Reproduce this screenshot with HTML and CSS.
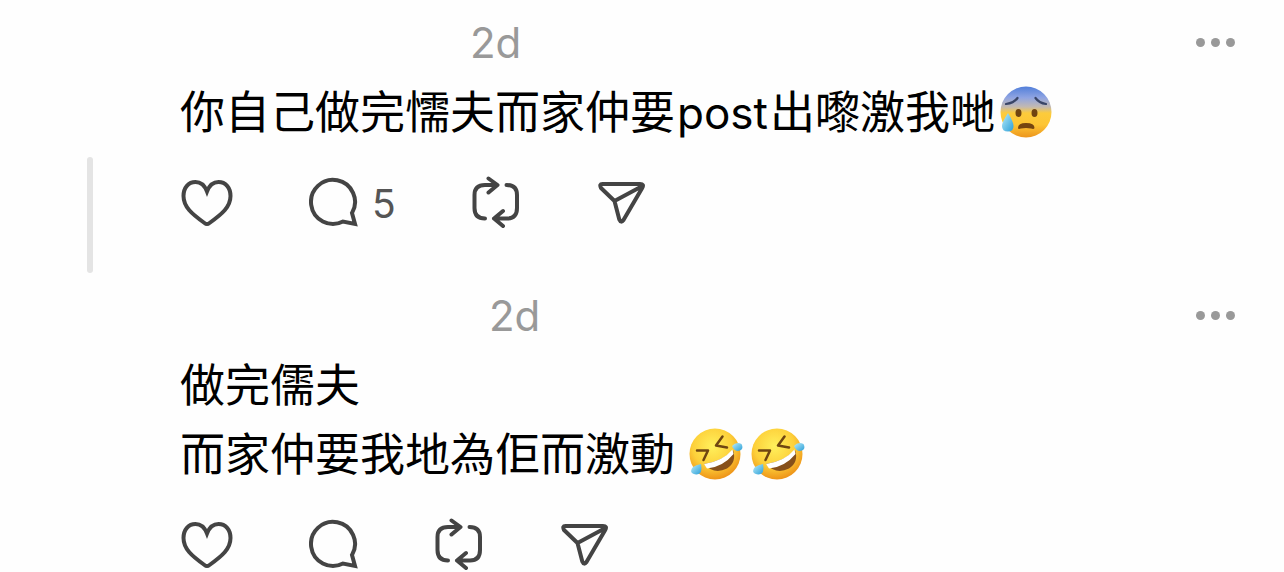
FILE: index.html
```
<!DOCTYPE html>
<html lang="zh-HK">
<head>
    <meta charset="UTF-8">
    <meta name="viewport" content="width=device-width, initial-scale=1.0">
    <title>Replies</title>
    <link rel="stylesheet" href="styles.css">
</head>
<body>

    <!-- Shared shapes -->
    <svg class="defs" aria-hidden="true">
        <defs>
            <radialGradient id="face" cx="45%" cy="35%" r="65%">
                <stop offset="0" stop-color="#fff05c"/>
                <stop offset="0.6" stop-color="#fdd03a"/>
                <stop offset="1" stop-color="#ee9418"/>
            </radialGradient>
            <linearGradient id="cold" x1="0" y1="0" x2="0" y2="1">
                <stop offset="0" stop-color="#527fda"/>
                <stop offset="0.22" stop-color="#8fa4e2"/>
                <stop offset="0.4" stop-color="#c3b9b0"/>
                <stop offset="0.52" stop-color="#fccb3c"/>
                <stop offset="0.75" stop-color="#fdc534"/>
                <stop offset="1" stop-color="#ec951d"/>
            </linearGradient>
            <linearGradient id="drop" x1="0" y1="0" x2="1" y2="1">
                <stop offset="0" stop-color="#b9ecfa"/>
                <stop offset="1" stop-color="#2b9fd8"/>
            </linearGradient>
            <symbol id="heart" viewBox="0 0 53 54">
                <path d="M27 15.500C24.500 9 20 6 15.500 6C8.500 6 3.500 11.500 3.500 20C3.500 31 12 38 24.500 47Q27 49 29.500 47C42 38 50.500 31 50.500 20C50.500 11.500 45.500 6 38.500 6C34 6 29.500 9 27 15.500Z"/>
            </symbol>
            <symbol id="reply" viewBox="0 0 50 54">
                <path d="M34 45.500A22 22 0 1 1 43 37L46 48Z"/>
            </symbol>
            <symbol id="repost" viewBox="0 0 50 54">
                <path d="M25 9H13Q2.500 9 2.500 19V32Q2.500 42.500 13 42.500M16.500 2.500L25.500 9L16.500 16.500M34.500 9Q45 9 45 19V32Q45 42.500 35 42.500H22M31 35L22 42.500L31 50"/>
            </symbol>
            <symbol id="share" viewBox="0 0 50 54">
                <path d="M4.500 8H42Q46.500 8 44.200 12L25.500 44Q23 47.500 21.300 43.500L16.500 25L3 12Q1 8 4.500 8ZM16.500 25L43.500 10.500"/>
            </symbol>
            <symbol id="laugh" viewBox="0 0 54 54">
                <circle cx="26" cy="27" r="25.500" fill="url(#face)"/>
                <path d="M15 37Q34 34 44 23Q48 35 38 41.500Q25 48 15 37Z" fill="#86501a"/>
                <path d="M15 37Q34 34 43.500 22.500L44.500 27Q34 40 18 41.500Z" fill="#fff"/>
                <path d="M8 23.500L19 23.500L14.500 33M33.500 9.500L27 18.500L38 20.500" fill="none" stroke="#704611" stroke-width="2.500" stroke-linejoin="round" stroke-linecap="round"/>
                <path d="M12 37Q14 48 7 47.500Q-1 46 4 40Q7 38 12 37Z" fill="url(#drop)"/>
                <path d="M43 19Q47 14.500 52.500 17Q55.500 23 49 24Q45 24 43 19Z" fill="url(#drop)"/>
            </symbol>
            <symbol id="worried" viewBox="0 0 54 54">
                <circle cx="27" cy="27" r="25.500" fill="url(#cold)"/>
                <path d="M7 19Q15 18 18.500 13M36.500 13Q40 18 47 19" fill="none" stroke="#394567" stroke-width="2.200" stroke-linecap="round"/>
                <ellipse cx="19.500" cy="28" rx="3" ry="4" fill="#704411"/>
                <ellipse cx="35.500" cy="28" rx="3" ry="4" fill="#704411"/>
                <path d="M19 43Q19 38 27 38Q35.500 38 35.500 43Q35 44.500 32 43.500Q27 42.500 22 43.500Q19 44.500 19 43Z" fill="#754510"/>
                <path d="M9 28Q14.500 37 14.500 41Q14.500 46.500 9 46.500Q3 46.500 3 41Q3 37 9 28Z" fill="url(#drop)"/>
            </symbol>
        </defs>
    </svg>

    <main class="thread">
        <article class="post">
            <div class="side"><div class="line"></div></div>
            <div class="content">
                <header class="post-header">
                    <span class="name"></span>
                    <time>2d</time>
                    <button type="button" class="more" aria-label="More"><i></i><i></i><i></i></button>
                </header>
                <p class="text">你自己做完懦夫而家仲要<span class="latin">post</span>出嚟激我哋<svg class="emoji" role="img" aria-label="😰"><use href="#worried"/></svg></p>
                <div class="actions">
                    <button type="button" aria-label="Like"><svg class="icon icon-heart"><use href="#heart"/></svg></button>
                    <button type="button" aria-label="Reply"><svg class="icon icon-reply"><use href="#reply"/></svg><span class="count">5</span></button>
                    <button type="button" aria-label="Repost"><svg class="icon"><use href="#repost"/></svg></button>
                    <button type="button" aria-label="Share"><svg class="icon"><use href="#share"/></svg></button>
                </div>
            </div>
        </article>

        <article class="post">
            <div class="side"></div>
            <div class="content">
                <header class="post-header">
                    <span class="name name-long"></span>
                    <time>2d</time>
                    <button type="button" class="more" aria-label="More"><i></i><i></i><i></i></button>
                </header>
                <p class="text">做完儒夫<br>而家仲要我地為佢而激動 <svg class="emoji" role="img" aria-label="🤣"><use href="#laugh"/></svg><svg class="emoji" role="img" aria-label="🤣"><use href="#laugh"/></svg></p>
                <div class="actions">
                    <button type="button" aria-label="Like"><svg class="icon icon-heart"><use href="#heart"/></svg></button>
                    <button type="button" aria-label="Reply"><svg class="icon icon-reply"><use href="#reply"/></svg></button>
                    <button type="button" aria-label="Repost"><svg class="icon"><use href="#repost"/></svg></button>
                    <button type="button" aria-label="Share"><svg class="icon"><use href="#share"/></svg></button>
                </div>
            </div>
        </article>
    </main>

</body>
</html>
```
FILE: styles.css
```
body {
    margin: 0;
    background-color: #fefefe;
    color: #000;
    font-family: Inter, "Noto Sans CJK TC", sans-serif;
}
.defs {
    position: absolute;
    width: 0;
    height: 0;
}
.post {
    display: grid;
    grid-template-columns: 180px 1fr;
}
.side {
    display: flex;
    justify-content: center;
    padding-top: 157px;
}
.line {
    width: 6px;
    border-radius: 3px;
    background-color: #e4e4e4;
}
.content {
    padding: 20px 49px 0 0;
}
.post:not(:last-child) .content {
    padding-bottom: 43px;
}
.post-header {
    display: flex;
    align-items: center;
    height: 45px;
}
.name {
    width: 290px;
}
.name-long {
    width: 309px;
}
time {
    color: #999;
    font-size: 42px;
}
button {
    display: flex;
    align-items: center;
    padding: 0;
    border: none;
    background: none;
    color: #444;
    font-family: inherit;
    cursor: pointer;
}
.more {
    gap: 6px;
    margin-left: auto;
}
.more i {
    width: 9px;
    height: 9px;
    border-radius: 50%;
    background-color: #999;
}
.text {
    margin: 10px 0 32px;
    font-family: "Noto Sans CJK TC", sans-serif;
    font-size: 45px;
    line-height: 69px;
}
.latin {
    margin: 0 2px;
    font-family: Inter, sans-serif;
    font-size: 44px;
    line-height: 1;
}
.emoji {
    width: 54px;
    height: 54px;
    margin: 0 4px;
    vertical-align: -10px;
}
.actions {
    display: flex;
    gap: 76px;
}
.icon {
    width: 50px;
    height: 54px;
    fill: none;
    stroke: currentColor;
    stroke-width: 4;
    stroke-linecap: round;
    stroke-linejoin: round;
}
.icon-heart {
    width: 53px;
}
.icon-heart,
.icon-reply {
    stroke-linejoin: miter;
}
.count {
    margin-left: 13px;
    color: #555;
    font-size: 39px;
}
```
